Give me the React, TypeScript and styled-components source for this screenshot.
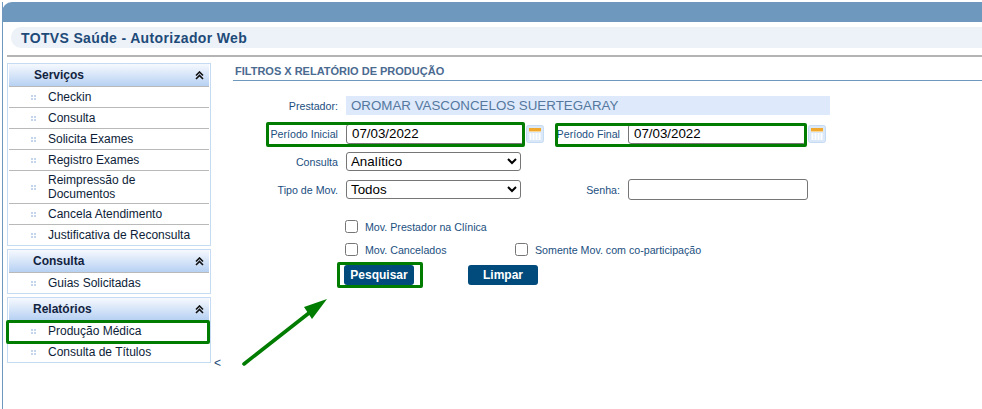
import React from 'react';
import styled, { createGlobalStyle } from 'styled-components';

const GlobalStyle = createGlobalStyle`
  html, body {
    margin: 0;
    padding: 0;
    background: #fff;
    font-family: "Liberation Sans", Arial, sans-serif;
  }
`;

const Page = styled.div`
  position: relative;
  width: 982px;
  height: 409px;
  overflow: hidden;
  padding: 2px 0 0 2px;
  box-sizing: border-box;
`;

const Frame = styled.div`
  height: 407px;
  width: 990px;
  border-left: 1px solid #6f98bf;
  box-sizing: border-box;
`;

const TopBar = styled.div`
  height: 20px;
  margin-left: -1px;
  background: #6f98bf;
  border-top-left-radius: 10px;
`;

const TitleBand = styled.div`
  height: 21px;
  margin: 5px 0 0 8px;
  padding-left: 10px;
  display: flex;
  align-items: center;
  background: #edf2f8;
  border-radius: 10px 0 0 10px;
`;

const AppTitle = styled.h1`
  margin: 0;
  font-size: 14px;
  letter-spacing: 0.35px;
  font-weight: bold;
  color: #1d4a78;
`;

const Rule = styled.div`
  height: 2px;
  margin: 7px 0 0 4px;
  background: #b4b4b4;
`;

const Body = styled.div`
  display: flex;
  margin: 6px 0 0 4px;
`;

const Sidebar = styled.nav`
  width: 204px;
  display: flex;
  flex-direction: column;
  gap: 3px;
`;

const Panel = styled.section`
  border: 1px solid #c5daf3;
  padding: 0 0 0 1px;
  width: 204px;
  box-sizing: border-box;
`;

const PanelHeader = styled.div<{ $indent: number }>`
  height: 22px;
  margin-right: 1px;
  padding-left: ${(p) => p.$indent}px;
  display: flex;
  align-items: center;
  justify-content: space-between;
  background: linear-gradient(#f6f9fe, #b7d1f3);
  font-size: 12px;
  font-weight: bold;
  color: #12233f;
`;

const Chevrons = styled.svg`
  width: 9px;
  height: 9px;
  margin-right: 5px;
  fill: none;
  stroke: #111;
  stroke-width: 1.6;
`;

const Item = styled.div`
  min-height: 21px;
  margin-right: 1px;
  border-top: 1px solid #b9b9b9;
  display: flex;
  align-items: center;
  box-sizing: border-box;
  padding: 2px 0 2px 22px;
  font-size: 12px;
  line-height: 14px;
  color: #0d1d38;
`;

const ItemLabel = styled.span`
  max-width: 150px;
`;

const Bullet = styled.span`
  flex: none;
  width: 5px;
  height: 5px;
  margin-right: 12px;
  background:
    linear-gradient(#c3d6ee, #c3d6ee) 0 0 / 2px 2px no-repeat,
    linear-gradient(#c3d6ee, #c3d6ee) 3px 0 / 2px 2px no-repeat,
    linear-gradient(#c3d6ee, #c3d6ee) 0 3px / 2px 2px no-repeat,
    linear-gradient(#c3d6ee, #c3d6ee) 3px 3px / 2px 2px no-repeat;
`;

const Collapse = styled.span`
  align-self: flex-end;
  margin: 0 0 -7px 3px;
  width: 18px;
  font-size: 12px;
  line-height: 14px;
  color: #1d4a78;
`;

const Main = styled.main`
  width: 760px;
  margin-left: 1px;
`;

const SectionTitle = styled.h2`
  margin: 0;
  height: 18px;
  padding: 2px 0 0 2px;
  box-sizing: border-box;
  border-bottom: 1px solid #6f98bf;
  font-size: 11px;
  line-height: 13px;
  font-weight: bold;
  color: #4a6a90;
`;

const Form = styled.form`
  margin-top: 15px;
  display: flex;
  flex-direction: column;
`;

const Row = styled.div<{ $height: number }>`
  display: flex;
  align-items: center;
  height: ${(p) => p.$height}px;
`;

const Label = styled.label<{ $width: number }>`
  flex: none;
  width: ${(p) => p.$width}px;
  margin-right: 8px;
  text-align: right;
  font-size: 10.67px;
  color: #1b4f80;
`;

const ReadValue = styled.div`
  width: 484px;
  height: 19px;
  padding-left: 5px;
  box-sizing: border-box;
  background: #deeafb;
  font-size: 13.33px;
  line-height: 19px;
  color: #55789f;
`;

const TextInput = styled.input<{ $width: number; $height: number }>`
  width: ${(p) => p.$width}px;
  height: ${(p) => p.$height}px;
  padding: 0 0 0 5px;
  box-sizing: border-box;
  border: 1px solid #767676;
  border-radius: 3px;
  background: #fff;
  font-family: "Liberation Sans", Arial, sans-serif;
  font-size: 13.33px;
  color: #000;
`;

const Select = styled.select`
  width: 175px;
  height: 19px;
  box-sizing: border-box;
  border: 1px solid #767676;
  border-radius: 3px;
  background: #fff;
  font-family: "Liberation Sans", Arial, sans-serif;
  font-size: 13.33px;
  color: #000;
`;

const CalendarIcon = styled.svg`
  flex: none;
  width: 18px;
  height: 18px;
  margin-left: 2px;
`;

const Checks = styled.div`
  margin: 12px 0 0 112px;
  display: flex;
  flex-direction: column;
  gap: 10px;
`;

const CheckRow = styled.div`
  display: flex;
`;

const CheckItem = styled.label<{ $width?: number }>`
  display: flex;
  align-items: center;
  height: 13px;
  width: ${(p) => (p.$width ? `${p.$width}px` : 'auto')};
  font-size: 10.67px;
  color: #1b4f80;
`;

const Check = styled.input`
  width: 13px;
  height: 13px;
  margin: 0 7px 0 0;
`;

const Actions = styled.div`
  margin: 9px 0 0 111px;
  display: flex;
  gap: 54px;
`;

const Button = styled.button`
  width: 70px;
  height: 20px;
  padding: 0;
  border: none;
  border-radius: 3px;
  background: #004a7c;
  color: #fff;
  font-family: "Liberation Sans", Arial, sans-serif;
  font-size: 12px;
  font-weight: bold;
`;

const Highlight = styled.div<{ $x: number; $y: number; $w: number; $h: number }>`
  position: absolute;
  left: ${(p) => p.$x}px;
  top: ${(p) => p.$y}px;
  width: ${(p) => p.$w}px;
  height: ${(p) => p.$h}px;
  box-sizing: border-box;
  border: 3px solid #007c00;
  border-radius: 2px;
  pointer-events: none;
`;

const Arrow = styled.svg`
  position: absolute;
  left: 236px;
  top: 292px;
  width: 100px;
  height: 80px;
`;

const services = [
  'Checkin',
  'Consulta',
  'Solicita Exames',
  'Registro Exames',
  'Reimpressão de Documentos',
  'Cancela Atendimento',
  'Justificativa de Reconsulta',
];

const Calendar = () => (
  <CalendarIcon viewBox="0 0 18 18">
    <rect x="0.5" y="0.5" width="17" height="17" rx="2" fill="#dbe8f8" stroke="#c5daf3" />
    <rect x="3" y="3" width="12" height="3" fill="#f0a92e" />
    <rect x="3" y="6" width="12" height="1" fill="#f7d79a" />
    <path d="M4.5 8v7M7.5 8v7M10.5 8v7M13.5 8v7" stroke="#fff" strokeWidth="2" />
  </CalendarIcon>
);

const Toggle = () => (
  <Chevrons viewBox="0 0 9 9">
    <path d="M1 4.5 4.5 1 8 4.5M1 8 4.5 4.5 8 8" />
  </Chevrons>
);

const MenuItem = ({ label }: { label: string }) => (
  <Item>
    <Bullet />
    <ItemLabel>{label}</ItemLabel>
  </Item>
);

export default function App() {
  return (
    <>
      <GlobalStyle />
      <Page>
        <Frame>
          <TopBar />
          <TitleBand>
            <AppTitle>TOTVS Saúde - Autorizador Web</AppTitle>
          </TitleBand>
          <Rule />
          <Body>
            <Sidebar>
              <Panel>
                <PanelHeader $indent={25}>
                  Serviços
                  <Toggle />
                </PanelHeader>
                {services.map((s) => (
                  <MenuItem key={s} label={s} />
                ))}
              </Panel>
              <Panel>
                <PanelHeader $indent={24}>
                  Consulta
                  <Toggle />
                </PanelHeader>
                <MenuItem label="Guias Solicitadas" />
              </Panel>
              <Panel>
                <PanelHeader $indent={24}>
                  Relatórios
                  <Toggle />
                </PanelHeader>
                <MenuItem label="Produção Médica" />
                <MenuItem label="Consulta de Títulos" />
              </Panel>
            </Sidebar>
            <Collapse>&lt;</Collapse>
            <Main>
              <SectionTitle>FILTROS X RELATÓRIO DE PRODUÇÃO</SectionTitle>
              <Form>
                <Row $height={19}>
                  <Label $width={105}>Prestador:</Label>
                  <ReadValue>OROMAR VASCONCELOS SUERTEGARAY</ReadValue>
                </Row>
                <Row $height={37}>
                  <Label $width={105}>Período Inicial</Label>
                  <TextInput $width={178} $height={20} defaultValue="07/03/2022" />
                  <Calendar />
                  <Label $width={76}>Período Final</Label>
                  <TextInput $width={178} $height={20} defaultValue="07/03/2022" />
                  <Calendar />
                </Row>
                <Row $height={19}>
                  <Label $width={105}>Consulta</Label>
                  <Select defaultValue="Analítico">
                    <option>Analítico</option>
                  </Select>
                </Row>
                <Row $height={37}>
                  <Label $width={105}>Tipo de Mov.</Label>
                  <Select defaultValue="Todos">
                    <option>Todos</option>
                  </Select>
                  <Label $width={99}>Senha:</Label>
                  <TextInput $width={180} $height={21} />
                </Row>
                <Checks>
                  <CheckRow>
                    <CheckItem>
                      <Check type="checkbox" />
                      Mov. Prestador na Clínica
                    </CheckItem>
                  </CheckRow>
                  <CheckRow>
                    <CheckItem $width={170}>
                      <Check type="checkbox" />
                      Mov. Cancelados
                    </CheckItem>
                    <CheckItem>
                      <Check type="checkbox" />
                      Somente Mov. com co-participação
                    </CheckItem>
                  </CheckRow>
                </Checks>
                <Actions>
                  <Button type="button">Pesquisar</Button>
                  <Button type="button">Limpar</Button>
                </Actions>
              </Form>
            </Main>
          </Body>
        </Frame>

        <Highlight $x={266} $y={122} $w={259} $h={25} />
        <Highlight $x={555} $y={123} $w={252} $h={24} />
        <Highlight $x={337} $y={262} $w={86} $h={26} />
        <Highlight $x={6} $y={320} $w={204} $h={24} />
        <Arrow viewBox="0 0 100 80">
          <path d="M8 72 73 21" stroke="#007c00" strokeWidth="3.6" strokeLinecap="round" fill="none" />
          <path d="M91 7 76 27 68 15Z" fill="#007c00" />
        </Arrow>
      </Page>
    </>
  );
}
